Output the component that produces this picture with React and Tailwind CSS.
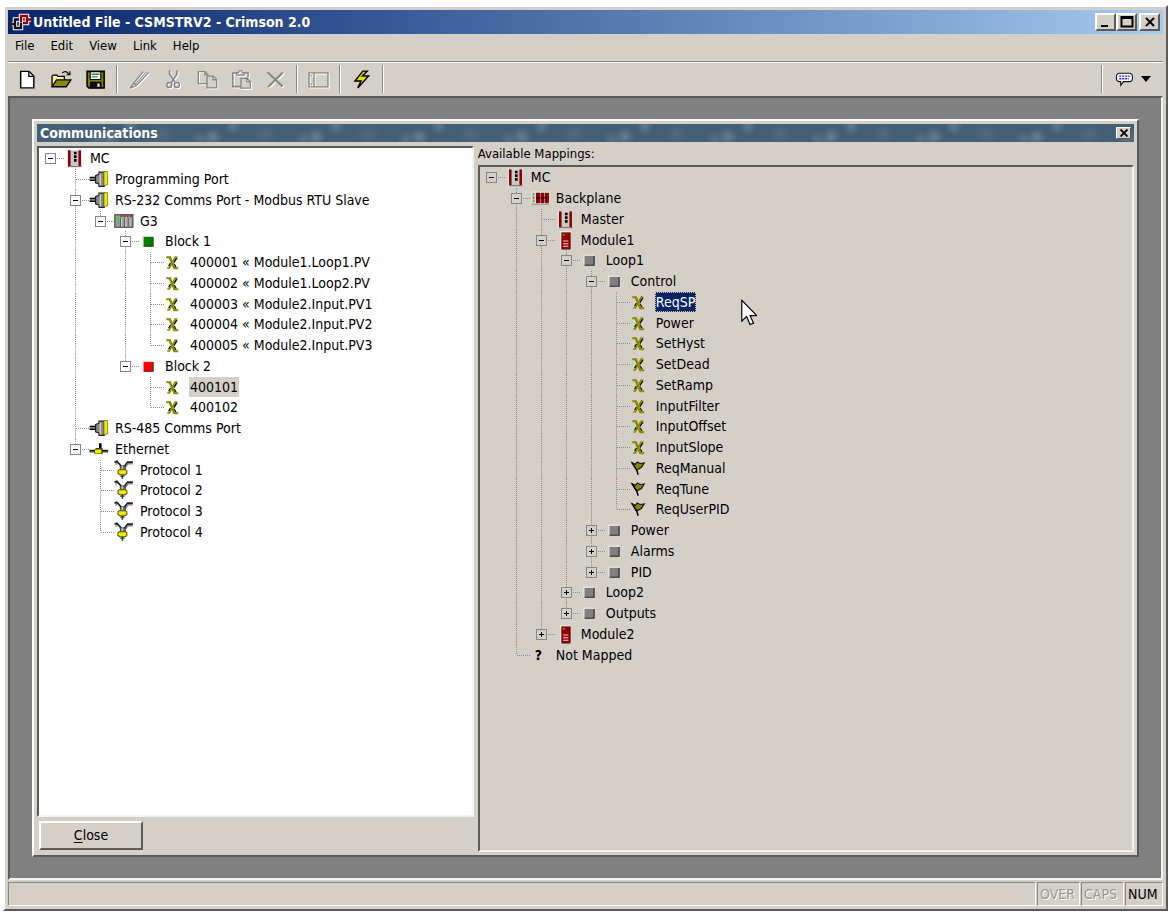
import { useState } from "react";

const portTree = [
    {
        label: "MC", icon: "rack", children: [
            { label: "Programming Port", icon: "port" },
            {
                label: "RS-232 Comms Port - Modbus RTU Slave", icon: "port", children: [
                    {
                        label: "G3", icon: "g3", children: [
                            {
                                label: "Block 1", icon: "green", children: [
                                    { label: "400001 « Module1.Loop1.PV", icon: "tag" },
                                    { label: "400002 « Module1.Loop2.PV", icon: "tag" },
                                    { label: "400003 « Module2.Input.PV1", icon: "tag" },
                                    { label: "400004 « Module2.Input.PV2", icon: "tag" },
                                    { label: "400005 « Module2.Input.PV3", icon: "tag" },
                                ],
                            },
                            {
                                label: "Block 2", icon: "red", children: [
                                    { label: "400101", icon: "tag" },
                                    { label: "400102", icon: "tag" },
                                ],
                            },
                        ],
                    },
                ],
            },
            { label: "RS-485 Comms Port", icon: "port" },
            {
                label: "Ethernet", icon: "ethernet", children: [
                    { label: "Protocol 1", icon: "protocol" },
                    { label: "Protocol 2", icon: "protocol" },
                    { label: "Protocol 3", icon: "protocol" },
                    { label: "Protocol 4", icon: "protocol" },
                ],
            },
        ],
    },
];

const mappingTree = [
    {
        label: "MC", icon: "rack", children: [
            {
                label: "Backplane", icon: "backplane", children: [
                    { label: "Master", icon: "rack" },
                    {
                        label: "Module1", icon: "module", children: [
                            {
                                label: "Loop1", icon: "gray", children: [
                                    {
                                        label: "Control", icon: "gray", children: [
                                            { label: "ReqSP", icon: "tag" },
                                            { label: "Power", icon: "tag" },
                                            { label: "SetHyst", icon: "tag" },
                                            { label: "SetDead", icon: "tag" },
                                            { label: "SetRamp", icon: "tag" },
                                            { label: "InputFilter", icon: "tag" },
                                            { label: "InputOffset", icon: "tag" },
                                            { label: "InputSlope", icon: "tag" },
                                            { label: "ReqManual", icon: "flag" },
                                            { label: "ReqTune", icon: "flag" },
                                            { label: "ReqUserPID", icon: "flag" },
                                        ],
                                    },
                                    { label: "Power", icon: "gray", closed: true, children: [] },
                                    { label: "Alarms", icon: "gray", closed: true, children: [] },
                                    { label: "PID", icon: "gray", closed: true, children: [] },
                                ],
                            },
                            { label: "Loop2", icon: "gray", closed: true, children: [] },
                            { label: "Outputs", icon: "gray", closed: true, children: [] },
                        ],
                    },
                    { label: "Module2", icon: "module", closed: true, children: [] },
                ],
            },
            { label: "Not Mapped", icon: "unmapped" },
        ],
    },
];

const raised = "border-2 border-t-white border-l-white border-r-[#5a5a5a] border-b-[#5a5a5a]";
const sunken = "border-2 border-t-[#5a5a5a] border-l-[#5a5a5a] border-r-[#f4f2ee] border-b-[#f4f2ee]";

const Square = ({ fill, dark }) => (
    <>
        <path d="M3 11.5V4h7.5" fill="none" stroke="#e8e6e0" strokeWidth="1" />
        <rect x="3.5" y="4.5" width="7" height="7" fill={fill} />
        <path d="M3.5 11.6h7.2V4.5" fill="none" stroke={dark} strokeWidth="0.9" />
    </>
);

const drawings = {
    rack: (
        <>
            <rect x="2.2" y="1.5" width="11.2" height="13" fill="#f2f2f2" />
            <rect x="3" y="1.8" width="10" height="12.2" fill="#c8c8c8" />
            <rect x="3" y="1.8" width="2" height="12" fill="#8e0000" />
            <rect x="11" y="1.8" width="2" height="12" fill="#8e0000" />
            <path d="M3 14.2h10.4" stroke="#707070" strokeWidth="0.8" />
            <path d="M7.6 2.8h2v2h-2zM7.6 5.6h2v2h-2zM7.6 8.4h2v2h-2z" fill="#000" />
        </>
    ),
    port: (
        <g transform="translate(0 -1.2)">
            <path d="M0.5 7.8h5M0.5 9.6h5" stroke="#000" strokeWidth="1.3" />
            <path d="M0.5 8.7h5" stroke="#909090" strokeWidth="0.7" />
            <path d="M5 6.2l2.6-1V3.6h4v10.8h-4v-1.8L5 11.8z" fill="#8a8a8a" stroke="#202020" strokeWidth="0.9" />
            <path d="M8.6 4.4v9.4" stroke="#d8d8d8" strokeWidth="0.9" />
            <path d="M11.4 3.2h2.8v10l-2.8.6z" fill="#f0e800" stroke="#77751a" strokeWidth="0.6" />
        </g>
    ),
    g3: (
        <g transform="translate(0 -0.6)">
            <rect x="0.6" y="3.4" width="13.8" height="9.6" fill="#9a9a9a" stroke="#4c4c4c" strokeWidth="0.9" />
            <path d="M5 6v6.5M8.2 6v6.5M11.4 6v6.5" stroke="#555" strokeWidth="0.8" />
            <path d="M5.8 6v6.5M9 6v6.5M12.2 6v6.5" stroke="#ddd" strokeWidth="0.7" />
            <path d="M5 4.5h8.5" stroke="#a01818" strokeWidth="1.2" strokeDasharray="1.3 1.1" />
            <rect x="1.7" y="5.4" width="2" height="2" fill="#0f0" />
        </g>
    ),
    backplane: (
        <>
            <rect x="0.8" y="2.8" width="14" height="9.6" fill="#eeeeee" />
            <rect x="1.2" y="3.2" width="3" height="8.8" fill="#c8c8c8" />
            <path d="M2.2 4.2h1v1.4h-1z" fill="#0c0" />
            <path d="M2.2 6.6h1v1.4h-1z" fill="#f02020" />
            <path d="M2.2 9h1v1.4h-1z" fill="#0c0" />
            <path d="M4.6 3.6h3v8h-3zM8 3.6h3v8H8zM11.4 3.6h3v8h-3z" fill="#860000" />
            <path d="M4.6 7.6h9.8" stroke="#200" strokeWidth="1.2" strokeDasharray="1.2 .6" />
            <path d="M1 12.4h13.8" stroke="#777" strokeWidth="0.6" />
        </>
    ),
    module: (
        <>
            <rect x="4" y="1" width="8" height="13.6" fill="#f4f4f4" />
            <rect x="4.8" y="1.8" width="6.8" height="12.6" fill="#960000" />
            <path d="M11.5 2v12.5H5" fill="none" stroke="#4a0000" strokeWidth="0.7" />
            <rect x="6" y="3" width="1.4" height="1.4" fill="#0c0" />
            <path d="M6.2 8.4h4M6.2 10.4h4M6.2 12.4h4" stroke="#f0d8d8" strokeWidth="0.8" />
        </>
    ),
    green: <Square fill="#008000" dark="#003800" />,
    red: <Square fill="#ff0000" dark="#600000" />,
    gray: <Square fill="#808080" dark="#202020" />,
    tag: (
        <>
            <path d="M9.8 4.4L7.4 8M5 8.4L3.6 11M7.6 9l1.4 2.6" stroke="#111" strokeWidth="1.2" fill="none" />
            <path d="M2.2 3.6h2.6L8.4 12h2v.6H7.6L4 4.4H2.2z" fill="#8a8a00" stroke="#8a8a00" strokeWidth="0.9" />
            <path d="M10.2 3.8H8.6L4 12.2H2.4" stroke="#8a8a00" strokeWidth="1.3" fill="none" />
        </>
    ),
    flag: (
        <>
            <path d="M1.6 3.6l2.4 1.2L5.6 3l2 1.2 3.2-.4-2.2 3.4-3.4 2z" fill="#868600" stroke="#111" strokeWidth="0.9" />
            <path d="M1.4 3.4l3.8 6 1 3.4" stroke="#000" strokeWidth="1.1" fill="none" />
        </>
    ),
    ethernet: (
        <>
            <path d="M0.4 9h14.2" stroke="#111" strokeWidth="1.5" />
            <path d="M0.4 10.2h14.2" stroke="#999" strokeWidth="0.8" />
            <path d="M8.6 3.2v4" stroke="#000" strokeWidth="2" />
            <path d="M5.4 6.8h5v4.6H4.2V8z" fill="#404000" />
            <path d="M4.6 8h4.8v3H4.6z" fill="#f2ea00" />
        </>
    ),
    protocol: (
        <g transform="translate(0 -0.8)">
            <path d="M0.4 2.4l1.8-.6 3.4 3.8M14.4 2.4h-4L8 5.4" fill="none" stroke="#222" strokeWidth="1.3" />
            <path d="M1 4.2l1.6-.8M14.2 3.6h-3.4l-2 2.6" fill="none" stroke="#888" strokeWidth="1.1" />
            <path d="M4.8 5.2h3.8v3.6H4.8z" fill="#777" stroke="#222" strokeWidth="0.6" />
            <path d="M6.2 5v4" stroke="#ddd" strokeWidth="0.8" />
            <path d="M3 9l1-.8h4.8l1 .8v2l-1.2 1H4.4L3 11z" fill="#f2ea00" stroke="#55530a" strokeWidth="0.8" />
            <path d="M6.4 12.2v2.8M5.4 12.6v1M7.4 12.6v1" stroke="#333" strokeWidth="1.2" />
        </g>
    ),
};

const NodeIcon = ({ name }) => (
    <span className="flex w-[25px] shrink-0 items-center">
        {name === "unmapped" ? (
            <b className="pl-[5px] text-[14px] leading-5">?</b>
        ) : (
            <svg viewBox="0 0 16 16" className="h-[21px] w-[21px] shrink-0" aria-hidden="true">{drawings[name]}</svg>
        )}
    </span>
);

// Vertical dots run up to the row's middle, and past it when a sibling follows
const Branch = ({ up, down, across, box }) => (
    <svg className="h-full w-[25px] shrink-0" aria-hidden="true">
        <g stroke="#8a8a8a" strokeDasharray="1 1">
            {up && <line x1="11.5" x2="11.5" y1="0" y2="50%" />}
            {down && <line x1="11.5" x2="11.5" y1="50%" y2="100%" />}
            {across && <line x1="12" x2="25" y1="10.5" y2="10.5" />}
        </g>
        {box && (
            <g>
                <rect x="6.5" y="5.5" width="10" height="10" fill={box.fill} stroke="#868686" />
                <path d="M9 10.5h5" stroke="#000" />
                {box.closed && <path d="M11.5 8v5" stroke="#000" />}
            </g>
        )}
    </svg>
);

const flatten = (nodes, toggled, lines = [], path = "") =>
    nodes.flatMap((node, i) => {
        const id = `${path}/${node.label}`;
        const last = i === nodes.length - 1;
        const closed = Boolean(node.closed) !== toggled.includes(id);
        const row = { id, node, lines, last, closed };
        if (!node.children || closed) return [row];
        return [row, ...flatten(node.children, toggled, [...lines, !last], id)];
    });

const Tree = ({ nodes, label, initial, active, boxFill }) => {
    const [toggled, setToggled] = useState([]);
    const [selected, setSelected] = useState(initial);

    const toggle = (id) =>
        setToggled((prev) => (prev.includes(id) ? prev.filter((x) => x !== id) : [...prev, id]));

    const highlight = active
        ? "bg-[#0a246a] text-white outline-1 -outline-offset-1 outline-dotted outline-[#d8c890]"
        : "bg-[#d4d0c8]";

    return (
        <ul role="tree" aria-label={label}>
            {flatten(nodes, toggled).map(({ id, node, lines, last, closed }) => (
                <li
                    key={id}
                    role="treeitem"
                    aria-selected={selected === id}
                    className="flex h-[21px] whitespace-nowrap nth-[4n]:h-5"
                >
                    {lines.map((line, i) => <Branch key={i} up={line} down={line} />)}
                    {node.children ? (
                        <button
                            className="h-full shrink-0"
                            aria-label={closed ? "Expand" : "Collapse"}
                            onClick={() => toggle(id)}
                        >
                            <Branch up={lines.length > 0} down={!last} across box={{ fill: boxFill, closed }} />
                        </button>
                    ) : (
                        <Branch up down={!last} across />
                    )}
                    <NodeIcon name={node.icon} />
                    <button
                        className={`h-5 px-px leading-5 ${selected === id ? highlight : ""}`}
                        onClick={() => setSelected(id)}
                    >
                        {node.label}
                    </button>
                </li>
            ))}
        </ul>
    );
};

const ToolButton = ({ label, disabled, narrow, children }) => (
    <button
        aria-label={label}
        disabled={disabled}
        className={`flex items-center justify-center ${narrow ? "w-[33px]" : "w-[34px]"}`}
    >
        <svg
            viewBox="0 0 16 16"
            fill="none"
            className={`h-[21px] w-[21px] ${disabled ? "text-[#868686] drop-shadow-[1px_1px_0_#ffffff]" : "text-black"}`}
            stroke="currentColor"
        >
            {children}
        </svg>
    </button>
);

const ToolSeparator = () => (
    <span className="mx-1 my-[3px] w-[2px] border-l border-r border-l-[#868686] border-r-white" />
);

const Toolbar = () => (
    <div className="flex h-[34px] items-stretch pr-3 pl-[2px]">
        <ToolButton label="New">
            <path d="M2.8 1.8h6.4l3.6 3.6v9H2.8z" fill="#fff" strokeWidth="1.1" />
            <path d="M9 1.8v3.8h3.8" strokeWidth="1" />
        </ToolButton>
        <ToolButton label="Open">
            <path d="M0.8 13.5V5.6l1-1h2.6l1 1h4.8v2.6" fill="#f4f0a0" />
            <path d="M0.8 13.5l3.4-5.2h11l-3.6 5.2z" fill="#8a8800" />
            <path d="M8.6 3.2c1.4-1.8 3.8-1.6 5 .8M14.4 1.8v2.6h-2.6" strokeWidth="0.9" />
        </ToolButton>
        <ToolButton label="Save">
            <path d="M1.6 1.8h13v12.6H3L1.6 13z" fill="#7c7a00" strokeWidth="1.2" />
            <path d="M4 2h8v6H4z" fill="#fff" strokeWidth="0.8" />
            <path d="M5 4h6M5 6h4.6" stroke="#2a8a4a" />
            <path d="M4.4 10.2h7.6v4H4.4z" fill="#111" />
            <path d="M9.4 11h1.8v2.6H9.4z" fill="#ddd" stroke="none" />
        </ToolButton>
        <ToolSeparator />
        <ToolButton label="Edit" disabled>
            <path d="M1 14.6l2.6-3.8L10.8 2M1 14.6l4.6-2L15 2.6M3.6 10.8l2 1.8" />
            <path d="M4.6 11.6L13 2.4" strokeWidth="0.7" />
        </ToolButton>
        <ToolButton label="Cut" disabled>
            <path d="M5 1v3l4.4 6.4M10.6 1v3L6.4 10.4" strokeWidth="1.2" />
            <circle cx="4.8" cy="12.2" r="1.9" strokeWidth="1.1" />
            <circle cx="10.6" cy="12.2" r="1.9" strokeWidth="1.1" />
        </ToolButton>
        <ToolButton label="Copy" disabled>
            <path d="M1 2h5l2.4 2.4v6.8H1zM6 2v2.6h2.4" />
            <path d="M7.6 5.4h4.8L15 8v6.4H7.6zM12.2 5.4v2.8H15" fill="#d4d0c8" />
        </ToolButton>
        <ToolButton label="Paste" disabled>
            <path d="M7.4 13.4H1.4V3h2.8M10 3h3v3.4" strokeWidth="1.2" />
            <path d="M4.4 4.6V2.8h1.2c.4-2 2.8-2 3.2 0H10v1.8z" />
            <path d="M7.6 7.2h4.6l2.6 2.4v5H7.6zM12 7.2v2.6h2.8" fill="#d4d0c8" />
        </ToolButton>
        <ToolButton label="Delete" disabled>
            <path d="M2 2.4l11.4 11M13.6 2.6L2.4 13.8" strokeWidth="1.6" />
        </ToolButton>
        <ToolSeparator />
        <ToolButton label="Panel" disabled narrow>
            <path d="M0.8 3h14.4v10.6H0.8zM4.6 3v10.6M2 5h1M2 11.6h1" />
        </ToolButton>
        <ToolSeparator />
        <ToolButton label="Download" narrow>
            <path d="M9 1.6h3.4L8.6 5.4h4.8L5.2 14.4l2.4-5.2H3z" fill="#e8de00" strokeWidth="1.1" />
        </ToolButton>
        <ToolSeparator />
        <span className="flex-1" />
        <ToolSeparator />
        <button className="flex items-center gap-[7px] pl-2" aria-label="Help options">
            <svg viewBox="0 0 18 14" className="h-[15px] w-[19px]" fill="#fff" stroke="#111">
                <path d="M4.4 1h9.2c4 0 4 8 0 8H8l-2.6 3.6V9h-1C.2 9 .2 1 4.4 1z" />
                <path d="M4 3.8h10M4 6.2h9" stroke="#2222e8" strokeWidth="1.4" strokeDasharray="2 .8" />
            </svg>
            <svg viewBox="0 0 10 6" className="h-[6px] w-[10px]"><path d="M0 0h10L5 6z" /></svg>
        </button>
    </div>
);

const CaptionButton = ({ label, d, className = "" }) => (
    <button
        aria-label={label}
        className={`flex h-[18px] w-[21px] items-center justify-center bg-[#d4d0c8] ${raised} ${className}`}
    >
        <svg viewBox="0 0 14 14" className="h-[14px] w-[14px] shrink-0" fill="none" stroke="#000"><path d={d} strokeWidth="2" /></svg>
    </button>
);

const Cursor = () => (
    <svg
        viewBox="0 0 12 21"
        className="pointer-events-none absolute top-[132px] left-[261px] h-[28px] w-4"
        aria-hidden="true"
    >
        <path
            d="M.6 1v15.6l3.6-3.4 2.6 6 2.6-1-2.6-5.8h5z"
            fill="#fff"
            stroke="#000"
            strokeWidth="0.9"
        />
    </svg>
);

const Communications = () => (
    <section className={`flex min-h-0 flex-1 flex-col bg-[#d4d0c8] p-[3px] ${raised}`}>
        <header className="flex h-[18px] shrink-0 items-center justify-between bg-[#435f75] bg-[radial-gradient(circle_at_73px_13px,#667c92,transparent_10px),radial-gradient(circle_at_60px_15px,#587086,transparent_9px),radial-gradient(circle_at_93px_2px,#60788e,transparent_9px),radial-gradient(circle_at_22px_10px,#4f6a80,transparent_12px)] bg-size-[103px_18px] px-[3px]">
            <h2 className="text-[14px] leading-[18px] font-bold text-white">Communications</h2>
            <button aria-label="Close panel" className="flex h-3 w-[15px] items-center justify-center border border-t-white border-r-[#5a5a5a] border-b-[#5a5a5a] border-l-white bg-[#d4d0c8]">
                <svg viewBox="0 0 8 8" className="h-2 w-2" stroke="#000" strokeWidth="1.8"><path d="M.5.5l7 7M7.5.5l-7 7" /></svg>
            </button>
        </header>
        <div className="flex min-h-0 flex-1 gap-1 pt-[4px] text-[14px]">
            <div className="flex w-[calc(40%-2px)] flex-col">
                <div className={`min-h-0 flex-1 overflow-hidden bg-white ${sunken}`}>
                    <Tree
                        nodes={portTree}
                        label="Communications"
                        initial="/MC/RS-232 Comms Port - Modbus RTU Slave/G3/Block 2/400101"
                        boxFill="#ffffff"
                    />
                </div>
                <div className="px-[2px] pt-1 pb-[2px]">
                    <button className={`h-[29px] w-[104px] ${raised}`}>
                        <span className="underline underline-offset-2">C</span>lose
                    </button>
                </div>
            </div>
            <div className="flex min-w-0 flex-1 flex-col">
                <h3 className="h-[19px] shrink-0 text-[13px] leading-4">Available Mappings:</h3>
                <div className={`relative min-h-0 flex-1 overflow-hidden ${sunken}`}>
                    <Tree
                        nodes={mappingTree}
                        label="Available Mappings"
                        initial="/MC/Backplane/Module1/Loop1/Control/ReqSP"
                        boxFill="#d4d0c8"
                        active
                    />
                    <Cursor />
                </div>
            </div>
        </div>
    </section>
);

const StatusCell = ({ children, className = "" }) => (
    <span className={`h-6 border border-t-[#868686] border-r-white border-b-white border-l-[#868686] px-[2px] text-[14px] leading-[22px] ${className}`}>
        {children}
    </span>
);

const App = () => (
    <div className="h-screen bg-white pt-[5px] pr-[5px] pb-1 pl-[3px] font-['DejaVu_Sans_Condensed','DejaVu_Sans',sans-serif] text-[13px] text-black">
        <div className={`flex h-full flex-col bg-[#d4d0c8] p-[3px] ${raised}`}>
            <header className="flex h-6 shrink-0 items-center bg-linear-to-r from-[#0a246a] to-[#a6caf0] pr-[3px] pl-[3px] text-white">
                <svg viewBox="0 0 21 19" className="mr-px h-[19px] w-[21px]" fill="none" aria-hidden="true">
                    <path d="M10 3h6v7h-6zM16 6.5h4M4 6.5h6v8.5H4zM1 11h3" stroke="#fff" strokeWidth="4.4" />
                    <path d="M10 9V3h6v7h-4M16 6.5h4" stroke="#9c0000" strokeWidth="2.4" />
                    <path d="M8 6.5H4V15h6V9.5M1 11h3" stroke="#111" strokeWidth="2.4" />
                </svg>
                <h1 className="flex-1 text-[14px] font-bold">Untitled File - CSMSTRV2 - Crimson 2.0</h1>
                <CaptionButton label="Minimize" d="M2 11h7" />
                <CaptionButton label="Maximize" d="M1.5 2h11v9.5h-11zM1.5 3h11" />
                <CaptionButton label="Close" d="M3 3l8 8M11 3l-8 8" className="ml-[2px]" />
            </header>
            <nav className="flex h-7 shrink-0 items-center gap-4 border-b border-b-[#868686] px-[7px] pb-[3px] shadow-[0_1px_0_#ffffff]">
                <button>File</button>
                <button>Edit</button>
                <button>View</button>
                <button>Link</button>
                <button>Help</button>
            </nav>
            <Toolbar />
            <main className={`flex min-h-0 flex-1 bg-[#808080] px-[22px] pt-[21px] pb-[21px] ${sunken}`}>
                <Communications />
            </main>
            <footer className="flex shrink-0 gap-px pt-[2px] text-[#9a978f]">
                <StatusCell className="flex-1" />
                <StatusCell className="w-[43px] text-shadow-[1px_1px_0_#ffffff]">OVER</StatusCell>
                <StatusCell className="w-[43px] text-shadow-[1px_1px_0_#ffffff]">CAPS</StatusCell>
                <StatusCell className="w-[38px] text-black">NUM</StatusCell>
            </footer>
        </div>
    </div>
);

export default App;
